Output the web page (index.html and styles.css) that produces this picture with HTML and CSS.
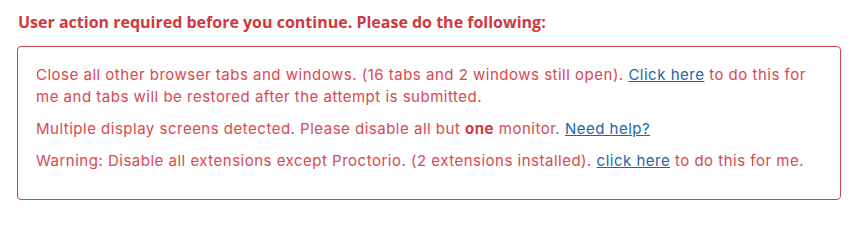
FILE: index.html
```html
<!DOCTYPE html>
<html lang="en">
<head>
<meta charset="utf-8">
<title>User action required</title>
<link rel="stylesheet" href="styles.css">
</head>
<body>
<div class="notice">
  <h2 class="notice-title">User action required before you continue. Please do the following:</h2>
  <div class="notice-box">
    <p class="notice-item"><span>Close all other browser tabs and windows. (16 tabs and 2 windows still open).</span> <a href="#" class="notice-link">Click here</a> <span>to do this for</span> <span>me and tabs will be restored after the attempt is submitted.</span></p>
    <p class="notice-item">Multiple display screens detected. Please disable all but <strong>one</strong> monitor. <a href="#" class="notice-link">Need help?</a></p>
    <p class="notice-item">Warning: Disable all extensions except Proctorio. (2 extensions installed). <a href="#" class="notice-link">click here</a> to do this for me.</p>
  </div>
</div>
</body>
</html>
```

FILE: styles.css
```css
html, body {
  margin: 0;
  padding: 0;
  background: #ffffff;
}

body {
  font-family: "Open Sans", Inter, "Liberation Sans", sans-serif;
}

.notice {
  padding: 11px 10px 0 17px;
}

.notice-title {
  margin: 0 0 13px 1px;
  font-size: 16px;
  line-height: 22px;
  font-weight: 700;
  color: #d0383e;
}

.notice-box {
  border: 1px solid #d4434a;
  border-radius: 4px;
  padding: 17px 18px 17px 18px;
  color: #d9484f;
  font-family: Inter, "Open Sans", "Liberation Sans", sans-serif;
}

.notice-item {
  margin: 0 0 10px 0;
  font-size: 15px;
  line-height: 22px;
  letter-spacing: 0.5px;
}

.notice-item strong {
  font-weight: 700;
  color: #d0383e;
}

.notice-link {
  color: #1b66ad;
  text-decoration: underline;
}
```
